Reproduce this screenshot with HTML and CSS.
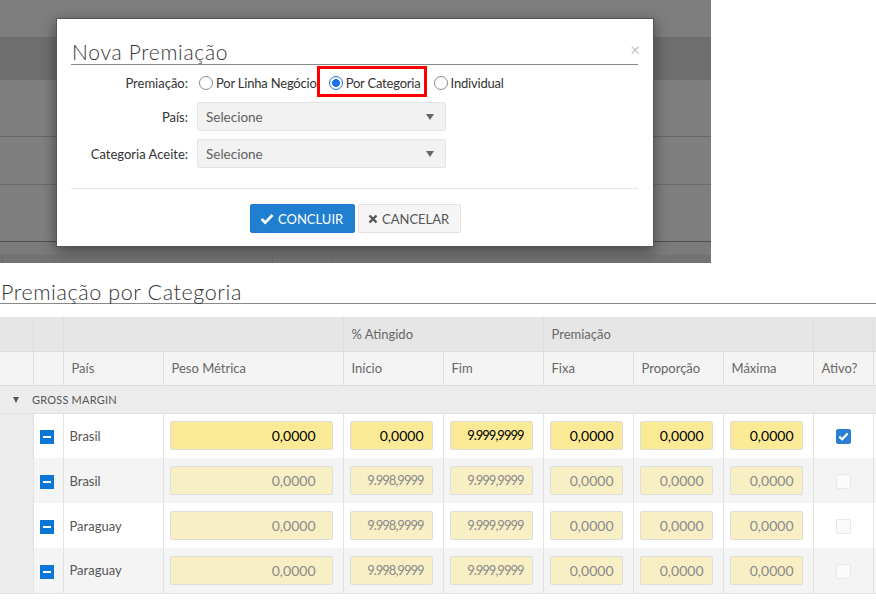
FILE: index.html
```html
<!DOCTYPE html>
<html lang="pt">
<head>
<meta charset="utf-8">
<title>Nova Premiação</title>
<link rel="stylesheet" href="styles.css">
</head>
<body>
<div class="backdrop">
  <div class="band band-a"></div>
  <div class="band band-b"></div>
  <div class="band band-c"></div>
  <div class="band band-d"></div>
  <div class="band band-e"></div>
  <div class="band band-f"></div>
  <div class="band band-g">
    <span class="vcol w1"></span><span class="vcol w2"></span><span class="vcol w3"></span><span class="vcol w4"></span>
  </div>

  <div class="modal">
    <div class="modal-header">
      <h4 class="modal-title">Nova Premiação</h4>
      <span class="close">×</span>
    </div>
    <div class="modal-body">
      <div class="form-row row-radio">
        <label class="form-label">Premiação:</label>
        <div class="radios">
          <span class="radio-item"><span class="radio"></span><span class="radio-text">Por Linha Negócio</span></span>
          <span class="radio-item selected"><span class="radio on"></span><span class="radio-text">Por Categoria</span></span>
          <span class="radio-item"><span class="radio"></span><span class="radio-text">Individual</span></span>
        </div>
      </div>
      <div class="form-row row-select">
        <label class="form-label">País:</label>
        <div class="select"><span>Selecione</span><span class="caret"></span></div>
      </div>
      <div class="form-row row-select second">
        <label class="form-label">Categoria Aceite:</label>
        <div class="select"><span>Selecione</span><span class="caret"></span></div>
      </div>
    </div>
    <div class="modal-footer">
      <button class="btn btn-primary"><svg width="14" height="12" viewBox="0 0 14 12"><polyline points="1.5,6 5.2,9.6 12.5,2" fill="none" stroke="#fff" stroke-width="2.8"/></svg>CONCLUIR</button>
      <button class="btn btn-default"><svg width="10" height="10" viewBox="0 0 10 10"><path d="M1.5 1.5 L8.5 8.5 M8.5 1.5 L1.5 8.5" stroke="#555" stroke-width="2.4"/></svg>CANCELAR</button>
    </div>
  </div>
</div>

<section class="section">
  <h3 class="section-title">Premiação por Categoria</h3>
  <div class="table-wrap">
    <table class="grid">
      <colgroup>
        <col class="c0"><col class="c1"><col class="c2"><col class="c3"><col class="c4"><col class="c5"><col class="c6"><col class="c7"><col class="c8"><col class="c9"><col class="c10">
      </colgroup>
      <thead>
        <tr class="h1">
          <th></th><th></th><th colspan="2"></th><th colspan="2">% Atingido</th><th colspan="3">Premiação</th><th></th><th></th>
        </tr>
        <tr class="h2">
          <th></th><th></th><th>País</th><th>Peso Métrica</th><th>Início</th><th>Fim</th><th>Fixa</th><th>Proporção</th><th>Máxima</th><th>Ativo?</th><th></th>
        </tr>
      </thead>
      <tbody>
        <tr class="group">
          <td colspan="11"><span class="tri"></span>GROSS MARGIN</td>
        </tr>
        <tr class="data odd active">
          <td class="indent"></td>
          <td class="ic"><span class="minus"></span></td>
          <td class="country">Brasil</td>
          <td><div class="num wide">0,0000</div></td>
          <td><div class="num">0,0000</div></td>
          <td><div class="num tight">9.999,9999</div></td>
          <td><div class="num">0,0000</div></td>
          <td><div class="num">0,0000</div></td>
          <td><div class="num">0,0000</div></td>
          <td class="chk"><span class="checkbox on"><svg width="11" height="9" viewBox="0 0 11 9"><polyline points="1.3,4.6 4.2,7.3 9.7,1.6" fill="none" stroke="#fff" stroke-width="2.2"/></svg></span></td>
          <td></td>
        </tr>
        <tr class="data even">
          <td class="indent"></td>
          <td class="ic"><span class="minus"></span></td>
          <td class="country">Brasil</td>
          <td><div class="num wide">0,0000</div></td>
          <td><div class="num tight">9.998,9999</div></td>
          <td><div class="num tight">9.999,9999</div></td>
          <td><div class="num">0,0000</div></td>
          <td><div class="num">0,0000</div></td>
          <td><div class="num">0,0000</div></td>
          <td class="chk"><span class="checkbox"></span></td>
          <td></td>
        </tr>
        <tr class="data odd">
          <td class="indent"></td>
          <td class="ic"><span class="minus"></span></td>
          <td class="country">Paraguay</td>
          <td><div class="num wide">0,0000</div></td>
          <td><div class="num tight">9.998,9999</div></td>
          <td><div class="num tight">9.999,9999</div></td>
          <td><div class="num">0,0000</div></td>
          <td><div class="num">0,0000</div></td>
          <td><div class="num">0,0000</div></td>
          <td class="chk"><span class="checkbox"></span></td>
          <td></td>
        </tr>
        <tr class="data even">
          <td class="indent"></td>
          <td class="ic"><span class="minus"></span></td>
          <td class="country">Paraguay</td>
          <td><div class="num wide">0,0000</div></td>
          <td><div class="num tight">9.998,9999</div></td>
          <td><div class="num tight">9.999,9999</div></td>
          <td><div class="num">0,0000</div></td>
          <td><div class="num">0,0000</div></td>
          <td><div class="num">0,0000</div></td>
          <td class="chk"><span class="checkbox"></span></td>
          <td></td>
        </tr>
      </tbody>
    </table>
  </div>
</section>
</body>
</html>
```
FILE: styles.css
```css
* { box-sizing: border-box; }
html, body { margin: 0; padding: 0; background: #fff; }
body {
  font-family: "Lato", "Open Sans", sans-serif;
  font-size: 13px;
  color: #333;
  overflow: hidden;
  width: 876px;
  height: 601px;
}

/* ---------- dimmed background ---------- */
.backdrop {
  position: relative;
  width: 711px;
  height: 263px;
  background: #7c7c7c;
  overflow: hidden;
}
.band { width: 100%; }
.band-a { height: 37px; background: #7e7e7e; }
.band-b { height: 43px; background: #6e6e6e; }
.band-c { height: 57px; background: #7f7f7f; border-bottom: 1px solid #666; }
.band-d { height: 48px; background: #7f7f7f; border-bottom: 1px solid #6a6a6a; }
.band-e { height: 57px; background: #7f7f7f; border-bottom: 1px solid #4f4f4f; }
.band-f { height: 13px; background: #7b7b7b; border-bottom: 1px solid #767676; }
.band-g { height: 8px; background: #737373; display: flex; }
.vcol { display: block; height: 100%; border-left: 1px solid #6a6a6a; }
.w1 { width: 2px; border-left: none; }
.w2 { width: 270px; }
.w3 { width: 59px; }
.w4 { width: 221px; }

/* ---------- modal ---------- */
.modal {
  position: absolute;
  left: 56px;
  top: 18px;
  width: 598px;
  height: 229px;
  background: #fff;
  border: 1px solid #555;
  box-shadow: 0 4px 14px rgba(0, 0, 0, 0.45);
  display: flex;
  flex-direction: column;
}
.modal-header {
  margin: 21px 15px 0 14px;
  border-bottom: 1px solid #8a8a8a;
  display: flex;
  justify-content: space-between;
  align-items: flex-end;
}
.modal-title {
  margin: 0;
  font-size: 21px;
  font-weight: 300;
  line-height: 24px;
  color: #333;
  letter-spacing: 0.7px;
  padding-left: 1px;
}
.close {
  color: #c4c4c4;
  font-size: 17px;
  line-height: 20px;
  margin-bottom: 4px;
  margin-right: -2px;
}
.modal-body {
  padding: 9px 0 20px 0;
  border-bottom: 1px solid #e5e5e5;
  margin: 0 15px 0 14px;
}
.form-row { display: flex; align-items: center; gap: 8px; }
.form-label {
  width: 118px;
  text-align: right;
  color: #333;
  padding-right: 1px;
}
.row-radio { height: 18px; }
.row-select { margin-top: 10px; height: 29px; }
.row-select.second { margin-top: 8px; }

.radios { display: flex; align-items: center; margin-left: 2px; }
.radio-item { position: relative; display: flex; align-items: center; gap: 3px; margin-right: 12px; color: #333; white-space: nowrap; letter-spacing: -0.2px; }
.radio-item.selected { margin-right: 13px; }
.radio {
  width: 14px; height: 14px;
  border-radius: 50%;
  border: 1px solid #8a8a8a;
  background: #fff;
  display: inline-block;
  flex: none;
}
.radio.on {
  border: 1px solid #1c6fd6;
  background: radial-gradient(circle, #1a73e8 0, #1a73e8 3.6px, #fff 4.2px);
}
.radio-item.selected::after {
  content: "";
  position: absolute;
  left: -12px; right: -6px; top: -9px; bottom: -6px;
  border: 3px solid #f00;
}
.select {
  width: 249px;
  height: 29px;
  background: #f2f2f2;
  border: 1px solid #e4e4e4;
  border-radius: 2px;
  display: flex;
  align-items: center;
  justify-content: space-between;
  padding: 0 10px 0 8px;
  color: #606060;
  font-size: 13.5px;
}
.caret {
  width: 0; height: 0;
  border-left: 4.5px solid transparent;
  border-right: 4.5px solid transparent;
  border-top: 6px solid #666;
  margin-right: 1px;
}
.modal-footer {
  display: flex;
  justify-content: center;
  gap: 3px;
  padding: 15px 0 0 0;
  margin-left: 1px;
}
.btn {
  height: 29px;
  border-radius: 2px;
  font-family: inherit;
  font-size: 13px;
  display: flex;
  align-items: center;
  gap: 4px;
  padding: 0 9px;
  cursor: pointer;
}
.btn-primary { background: #1f7fd0; border: 1px solid #1f7ad0; color: #fff; width: 105px; }
.btn-default { background: #f5f5f5; border: 1px solid #e2e2e2; color: #555; width: 103px; }

/* ---------- section ---------- */
.section { padding-top: 19px; }
.section-title {
  margin: 0;
  padding-left: 1px;
  font-size: 21.5px;
  font-weight: 300;
  line-height: 21px;
  color: #333;
  letter-spacing: 0.6px;
  border-bottom: 1px solid #888;
}
.table-wrap { margin-top: 13px; width: 876px; overflow: hidden; }
.grid {
  border-collapse: collapse;
  table-layout: fixed;
  width: 893px;
}
.c0 { width: 33px; } .c1 { width: 30px; } .c2 { width: 100px; } .c3 { width: 180px; }
.c4 { width: 100px; } .c5 { width: 100px; } .c6 { width: 90px; } .c7 { width: 90px; }
.c8 { width: 90px; } .c9 { width: 60px; } .c10 { width: 20px; }

.grid th {
  font-weight: 400;
  color: #666;
  text-align: left;
  padding: 0 0 0 8px;
  border: 1px solid #dcdcdc;
  border-top: none;
  font-size: 13px;
}
.grid tr.h1 th { height: 34px; background: #e6e6e6; }
.grid tr.h2 th { height: 34px; background: #f4f4f4; }
.grid tr.h2 th:first-child, .grid tr.h1 th:first-child { border-left: none; }

.grid tr.group td {
  height: 28px;
  background: #ececec;
  color: #555;
  font-size: 11px;
  padding: 0 0 0 13px;
  border-bottom: 1px solid #e2e2e2;
  letter-spacing: 0.2px;
}
.tri {
  display: inline-block;
  width: 0; height: 0;
  border-left: 3.5px solid transparent;
  border-right: 3.5px solid transparent;
  border-top: 6px solid #555;
  margin-right: 13px;
  vertical-align: 1px;
}
.grid tr.data td {
  height: 45px;
  border-left: 1px solid #e2e2e2;
  border-right: 1px solid #e2e2e2;
  padding: 0;
}
.grid tr.odd td { background: #fff; }
.grid tr.even td { background: #f4f4f4; }
.grid tr.data td.indent { background: #ececec; border-left: none; }
.grid tr.data:last-child td { border-bottom: 1px solid #e2e2e2; }
.ic { text-align: center; }
.minus {
  display: inline-block;
  width: 14px; height: 14px;
  background: #0a77d5;
  position: relative;
  vertical-align: middle;
  margin-left: -3px;
}
.minus::after {
  content: "";
  position: absolute;
  left: 3px; right: 3px; top: 6px; height: 2px;
  background: #fff;
}
.country { padding-left: 6px !important; color: #555; }
.num {
  height: 29px;
  margin: 0 10px 0 6px;
  border: 1px solid #ddd;
  border-radius: 2px;
  text-align: right;
  padding-right: 8px;
  line-height: 27px;
  font-size: 14px;
  background: #f8efc5;
  color: #8a8a8a;
}
.num.wide { padding-right: 16px; }
.num.tight { letter-spacing: -1px; font-size: 13px; }
.active .num { background: #fbea95; color: #000; }
.chk { text-align: center; }
.checkbox {
  display: inline-block;
  width: 15px; height: 15px;
  border: 1px solid #e8e8e8;
  background: #fafafa;
  border-radius: 2px;
  vertical-align: middle;
  margin-left: 1px;
}
.checkbox.on {
  background: #2a7fd4;
  border-color: #2a7fd4;
  display: inline-flex;
  align-items: center;
  justify-content: center;
}
```
